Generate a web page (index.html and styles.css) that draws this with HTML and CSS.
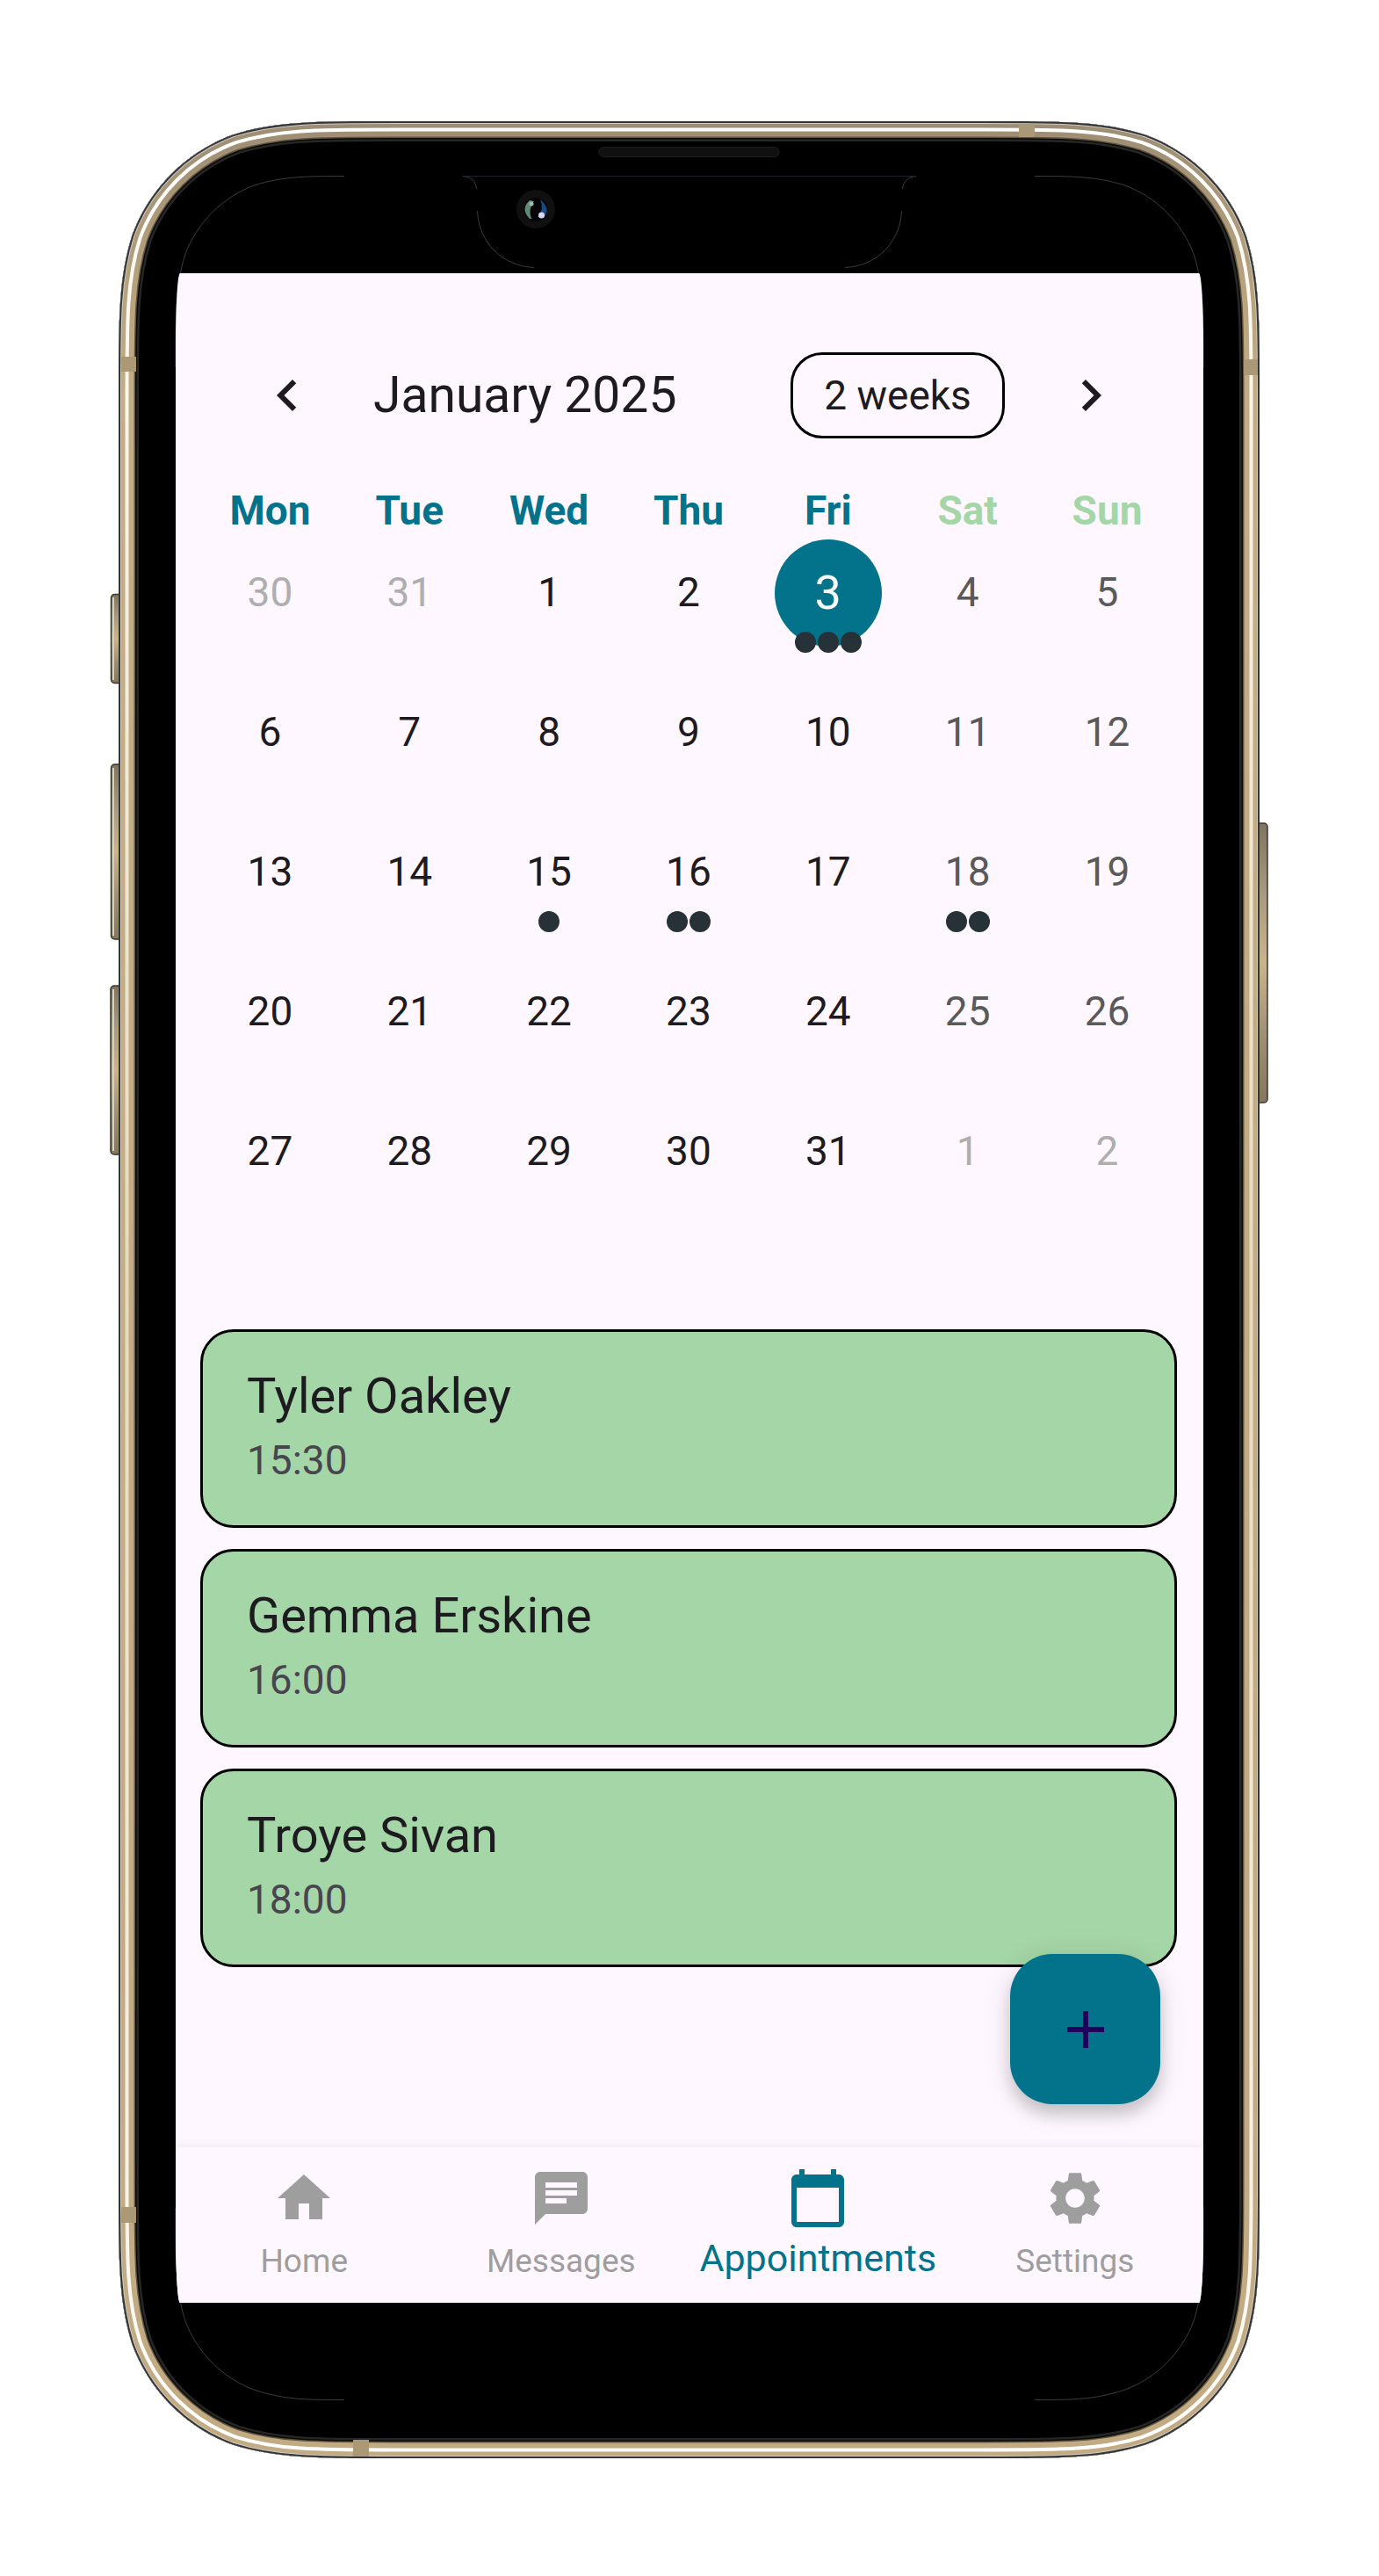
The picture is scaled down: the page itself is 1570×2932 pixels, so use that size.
FILE: index.html
```html
<!DOCTYPE html>
<html lang="en">
<head>
<meta charset="utf-8">
<meta name="viewport" content="width=device-width, initial-scale=1">
<title>Appointments</title>
<link rel="stylesheet" href="styles.css">
</head>
<body>
<div class="stage">
<div class="phone">
  <svg class="phone-frame" viewBox="135 138 1299 2660" preserveAspectRatio="none" aria-hidden="true">
    <defs>
      <linearGradient id="gold" gradientUnits="userSpaceOnUse" x1="0" y1="138" x2="0" y2="2798">
        <stop offset="0" stop-color="#9d8d74"/><stop offset=".07" stop-color="#b7a27c"/><stop offset=".12" stop-color="#c2ad84"/><stop offset="1" stop-color="#c2ab83"/>
      </linearGradient>
      <linearGradient id="shine" gradientUnits="userSpaceOnUse" x1="0" y1="138" x2="0" y2="2798">
        <stop offset="0" stop-color="#fff"/><stop offset=".15" stop-color="#f8f2e8"/><stop offset=".5" stop-color="#e6d9c0"/><stop offset=".85" stop-color="#f6f0e4"/><stop offset="1" stop-color="#fff"/>
      </linearGradient>
      <linearGradient id="key" x1="0" y1="0" x2="0" y2="1">
        <stop offset="0" stop-color="#7f745f"/><stop offset=".25" stop-color="#a89a80"/><stop offset=".5" stop-color="#cab48a"/><stop offset=".75" stop-color="#a09176"/><stop offset="1" stop-color="#84775c"/>
      </linearGradient>
      <path id="body" d="M450 138H1119C1210 138 1255 138 1304 153.4C1357.2 172.8 1399.2 214.8 1418.6 268C1434 317 1434 362 1434 453V2483C1434 2574 1434 2619 1418.6 2668C1399.2 2721.2 1357.2 2763.2 1304 2782.6C1255 2798 1210 2798 1119 2798H450C359 2798 314 2798 265 2782.6C211.8 2763.2 169.8 2721.2 150.4 2668C135 2619 135 2574 135 2483V453C135 362 135 317 150.4 268C169.8 214.8 211.8 172.8 265 153.4C314 138 359 138 450 138Z"/>
      <clipPath id="body-clip"><use href="#body"/></clipPath>
    </defs>
    <g fill="url(#key)" stroke="#3a372c" stroke-width="1.5">
      <rect x="126.500" y="676.500" width="14" height="101" rx="4"/>
      <rect x="126.500" y="870" width="14" height="199" rx="4"/>
      <rect x="126" y="1122" width="14" height="192" rx="4"/>
      <rect x="1428" y="937" width="15" height="318" rx="4"/>
    </g>
    <path d="M129 680V774M129 874V1065M129 1126V1310" stroke="#d6d0bf" stroke-width="2"/>
    <use href="#body" fill="#000"/>
    <g clip-path="url(#body-clip)" fill="none">
      <use href="#body" stroke="#262626" stroke-width="46"/>
      <use href="#body" stroke="#0c0b08" stroke-width="41"/>
      <use href="#body" stroke="#5f5440" stroke-width="38"/>
      <use href="#body" stroke="url(#gold)" stroke-width="35"/>
      <use href="#body" stroke="url(#shine)" stroke-width="23"/>
      <use href="#body" stroke="url(#gold)" stroke-width="15"/>
      <use href="#body" stroke="#cfcbc2" stroke-width="6"/>
      <use href="#body" stroke="#34363a" stroke-width="4"/>
    </g>
    <g fill="#ab9874">
      <rect x="138" y="406" width="17" height="17"/><rect x="1416" y="409" width="16" height="18"/>
      <rect x="138" y="2512" width="17" height="18"/><rect x="1160" y="141" width="18" height="15"/>
      <rect x="402" y="2777" width="18" height="19"/>
    </g>
    <g fill="none" stroke="#3c3c3c">
      <path d="M200 418C200 356 200 324 210.700 290C224.200 253.300 253.300 224.200 290 210.700C324 200.500 350 200.500 392 200.500"/>
      <path d="M1370 418C1370 356 1370 324 1359.300 290C1345.800 253.300 1316.700 224.200 1280 210.700C1246 200.500 1220 200.500 1178 200.500"/>
      <path d="M200 2513C200 2575 200 2607 210.700 2641C224.200 2677.700 253.300 2706.800 290 2720.300C324 2731.500 350 2731.500 392 2731.500"/>
      <path d="M1370 2513C1370 2575 1370 2607 1359.300 2641C1345.800 2677.700 1316.700 2706.800 1280 2720.300C1246 2731.500 1220 2731.500 1178 2731.500"/>
      <path d="M527 200.500C536 201 542 207 542.500 215M543.500 240C545 276 572 303 608 304.500M1043 200.500C1034 201 1028 207 1027.500 215M1026.500 240C1025 276 998 303 962 304.500"/>
      <path d="M530 200.500H1040" stroke="#1b222e"/>
    </g>
    <rect x="682" y="167.500" width="205" height="11" rx="5.500" fill="#101010" stroke="#1e1e1e"/>
    <circle cx="610" cy="238" r="22" fill="#101010"/>
    <circle cx="610" cy="238.500" r="13.500" fill="#050505"/>
    <path d="M603 228Q592 238 603 249L605 249Q601 238 608 229Z" fill="#5f8a76"/>
    <path d="M615 227Q628 238 619 248L612 247Q620 238 615 227Z" fill="#174a86"/>
    <circle cx="605" cy="232" r="2.500" fill="#9fbcae"/><circle cx="616.500" cy="245" r="3.500" fill="#ddd6ee"/>
  </svg>

  <div class="screen">
    <main class="content">
      <header class="month-bar">
        <button class="icon-button" type="button" aria-label="Previous month"><svg class="icon" viewBox="0 0 24 24"><path d="M15.410 7.410 14 6l-6 6 6 6 1.410-1.410L10.830 12z"/></svg></button>
        <h1 class="month">January 2025</h1>
        <button class="format" type="button">2 weeks</button>
        <button class="icon-button" type="button" aria-label="Next month"><svg class="icon" viewBox="0 0 24 24"><path d="M10 6 8.590 7.410 13.170 12l-4.580 4.590L10 18l6-6z"/></svg></button>
      </header>

      <table class="calendar">
        <thead>
          <tr><th scope="col">Mon</th><th scope="col">Tue</th><th scope="col">Wed</th><th scope="col">Thu</th><th scope="col">Fri</th><th scope="col" class="rest">Sat</th><th scope="col" class="rest">Sun</th></tr>
        </thead>
        <tbody>
          <tr>
            <td><button class="day outside" type="button">30</button></td>
            <td><button class="day outside" type="button">31</button></td>
            <td><button class="day" type="button">1</button></td>
            <td><button class="day" type="button">2</button></td>
            <td><button class="day selected" type="button" aria-pressed="true">3</button><div class="dots"><i class="dot"></i><i class="dot"></i><i class="dot"></i></div></td>
            <td><button class="day weekend" type="button">4</button></td>
            <td><button class="day weekend" type="button">5</button></td>
          </tr>
          <tr>
            <td><button class="day" type="button">6</button></td>
            <td><button class="day" type="button">7</button></td>
            <td><button class="day" type="button">8</button></td>
            <td><button class="day" type="button">9</button></td>
            <td><button class="day" type="button">10</button></td>
            <td><button class="day weekend" type="button">11</button></td>
            <td><button class="day weekend" type="button">12</button></td>
          </tr>
          <tr>
            <td><button class="day" type="button">13</button></td>
            <td><button class="day" type="button">14</button></td>
            <td><button class="day" type="button">15</button><div class="dots"><i class="dot"></i></div></td>
            <td><button class="day" type="button">16</button><div class="dots"><i class="dot"></i><i class="dot"></i></div></td>
            <td><button class="day" type="button">17</button></td>
            <td><button class="day weekend" type="button">18</button><div class="dots"><i class="dot"></i><i class="dot"></i></div></td>
            <td><button class="day weekend" type="button">19</button></td>
          </tr>
          <tr>
            <td><button class="day" type="button">20</button></td>
            <td><button class="day" type="button">21</button></td>
            <td><button class="day" type="button">22</button></td>
            <td><button class="day" type="button">23</button></td>
            <td><button class="day" type="button">24</button></td>
            <td><button class="day weekend" type="button">25</button></td>
            <td><button class="day weekend" type="button">26</button></td>
          </tr>
          <tr>
            <td><button class="day" type="button">27</button></td>
            <td><button class="day" type="button">28</button></td>
            <td><button class="day" type="button">29</button></td>
            <td><button class="day" type="button">30</button></td>
            <td><button class="day" type="button">31</button></td>
            <td><button class="day outside" type="button">1</button></td>
            <td><button class="day outside" type="button">2</button></td>
          </tr>
        </tbody>
      </table>

      <ul class="appointments">
        <li class="appointment"><h2 class="name">Tyler Oakley</h2><time class="time">15:30</time></li>
        <li class="appointment"><h2 class="name">Gemma Erskine</h2><time class="time">16:00</time></li>
        <li class="appointment"><h2 class="name">Troye Sivan</h2><time class="time">18:00</time></li>
      </ul>

      <button class="add" type="button" aria-label="Add appointment"><svg class="icon" viewBox="0 0 24 24"><path d="M19 13h-6v6h-2v-6H5v-2h6V5h2v6h6z"/></svg></button>
    </main>

    <nav class="tabs">
      <a class="tab" href="#home"><svg class="icon" viewBox="0 0 24 24"><path d="M10 20v-6h4v6h5v-8h3L12 3 2 12h3v8z"/></svg><span>Home</span></a>
      <a class="tab" href="#messages"><svg class="icon" viewBox="0 0 24 24"><path d="M20 2H4c-1.100 0-1.990.9-1.990 2L2 22l4-4h14c1.100 0 2-.9 2-2V4c0-1.100-.9-2-2-2zM6 9h12v2H6V9zm8 5H6v-2h8v2zm4-6H6V6h12v2z"/></svg><span>Messages</span></a>
      <a class="tab active" href="#appointments" aria-current="page"><svg class="icon" viewBox="0 0 24 24"><path d="M20 3h-1V1h-2v2H7V1H5v2H4c-1.100 0-2 .9-2 2v16c0 1.100.9 2 2 2h16c1.100 0 2-.9 2-2V5c0-1.100-.9-2-2-2zm0 18H4V8h16v13z"/></svg><span>Appointments</span></a>
      <a class="tab" href="#settings"><svg class="icon" viewBox="0 0 24 24"><path d="M19.140 12.940c.04-.3.06-.61.06-.94 0-.32-.02-.64-.07-.94l2.030-1.580c.18-.14.23-.41.12-.61l-1.920-3.320c-.12-.22-.37-.29-.59-.22l-2.390.96c-.5-.38-1.030-.7-1.620-.94l-.36-2.540c-.04-.24-.24-.41-.48-.41h-3.840c-.24 0-.43.17-.47.41l-.36 2.540c-.59.24-1.130.57-1.620.94l-2.390-.96c-.22-.08-.47 0-.59.22L2.740 8.870c-.12.21-.08.47.12.61l2.030 1.580c-.05.3-.09.63-.09.94s.02.64.07.94l-2.030 1.580c-.18.14-.23.41-.12.61l1.920 3.320c.12.22.37.29.59.22l2.390-.96c.5.38 1.030.7 1.620.94l.36 2.540c.05.24.24.41.48.41h3.840c.24 0 .44-.17.47-.41l.36-2.540c.59-.24 1.130-.56 1.620-.94l2.390.96c.22.08.47 0 .59-.22l1.920-3.320c.12-.22.07-.47-.12-.61l-2.010-1.580zM12 15.600c-1.980 0-3.600-1.620-3.600-3.600s1.620-3.600 3.600-3.600 3.600 1.620 3.600 3.600-1.620 3.600-3.600 3.600z"/></svg><span>Settings</span></a>
    </nav>
  </div>
</div>
</div>
</body>
</html>
```
FILE: styles.css
```css
:root {
  --teal: #03738c;
  --green: #a5d6a7;
  --surface: #fef7ff;
  --ink: #1d1b20;
}

* { box-sizing: border-box; }

body {
  margin: 0;
  background: #fff;
  color: var(--ink);
  font-family: Roboto, "Liberation Sans", sans-serif;
}

button {
  margin: 0;
  padding: 0;
  border: 0;
  background: none;
  color: inherit;
  font: inherit;
  cursor: pointer;
}

h1, h2, ul { margin: 0; padding: 0; font-weight: 400; }

.stage {
  display: flex;
  min-height: 100vh;
  padding: 138px 136px 134px 135px;
}

.phone {
  position: relative;
  display: flex;
  flex: 1;
  padding: 173px 64px 177px 65px;
}

/* decorative hardware, drawn behind the screen */
.phone-frame {
  position: absolute;
  inset: 0;
  width: 100%;
  height: 100%;
  overflow: visible;
}

.screen {
  position: relative;
  display: flex;
  flex: 1;
  flex-direction: column;
  overflow: hidden;
  border-radius: 5px / 80px;
  background: var(--surface);
}

.content {
  position: relative;
  flex: 1;
  padding: 90px 30px 204px 28px;
}

.icon {
  display: block;
  width: 72px;
  height: 72px;
  fill: currentColor;
}

.month-bar {
  display: flex;
  align-items: center;
  padding: 0 62px 0 63px;
}

.month {
  flex: 1;
  padding-left: 62px;
  font-size: 57px;
  line-height: 66px;
}

.format {
  min-width: 244px;
  height: 98px;
  margin-right: 62px;
  padding: 0 30px;
  border: 3px solid #000;
  border-radius: 36px;
  font-size: 46px;
}

.calendar {
  width: 100%;
  margin-top: 48px;
  border-collapse: collapse;
  table-layout: fixed;
  text-align: center;
}

.calendar th {
  height: 67px;
  padding: 0;
  color: var(--teal);
  font-size: 46px;
  font-weight: 700;
  line-height: 54px;
}

.calendar .rest { color: var(--green); }

.calendar td {
  height: 159px;
  padding: 0;
  vertical-align: top;
}

.day {
  display: block;
  width: 122px;
  height: 122px;
  margin: 0 auto;
  padding-bottom: 2px;
  border-radius: 50%;
  font-size: 46px;
}

.day.weekend { color: #5a5a5a; }
.day.outside { color: #aeaeae; }
.day.selected { background: var(--teal); color: #fafafa; font-size: 54px; }

.dots {
  position: relative;
  display: flex;
  justify-content: center;
  gap: 2px;
  margin-top: -17px;
}

.dot {
  width: 24px;
  height: 24px;
  border-radius: 50%;
  background: #263238;
}

.appointments {
  display: grid;
  gap: 24px;
  margin-top: 104px;
  list-style: none;
}

.appointment {
  height: 226px;
  padding: 39px 50px;
  border: 3px solid #000;
  border-radius: 38px;
  background: var(--green);
}

.name {
  font-size: 56px;
  line-height: 68px;
}

.time {
  display: block;
  margin-top: 6px;
  color: #49454f;
  font-size: 46px;
  line-height: 66px;
}

.add {
  position: absolute;
  right: 49px;
  bottom: 49px;
  display: grid;
  place-items: center;
  width: 171px;
  height: 171px;
  border-radius: 48px;
  background: var(--teal);
  color: #21005d;
  box-shadow: 0 12px 18px rgba(0, 0, 0, .18), 0 4px 36px rgba(0, 0, 0, .09);
}

.tabs {
  position: relative;
  display: flex;
  height: 177px;
  background: var(--surface);
  box-shadow: 0 -2px 10px rgba(0, 0, 0, .06);
}

.tab {
  display: flex;
  flex: 1 1 0;
  flex-direction: column;
  align-items: center;
  padding-top: 22px;
  color: #9e9e9e;
  font-size: 37px;
  line-height: 71px;
  text-decoration: none;
}

.tab.active {
  color: var(--teal);
  font-size: 43px;
  line-height: 64px;
}
```
